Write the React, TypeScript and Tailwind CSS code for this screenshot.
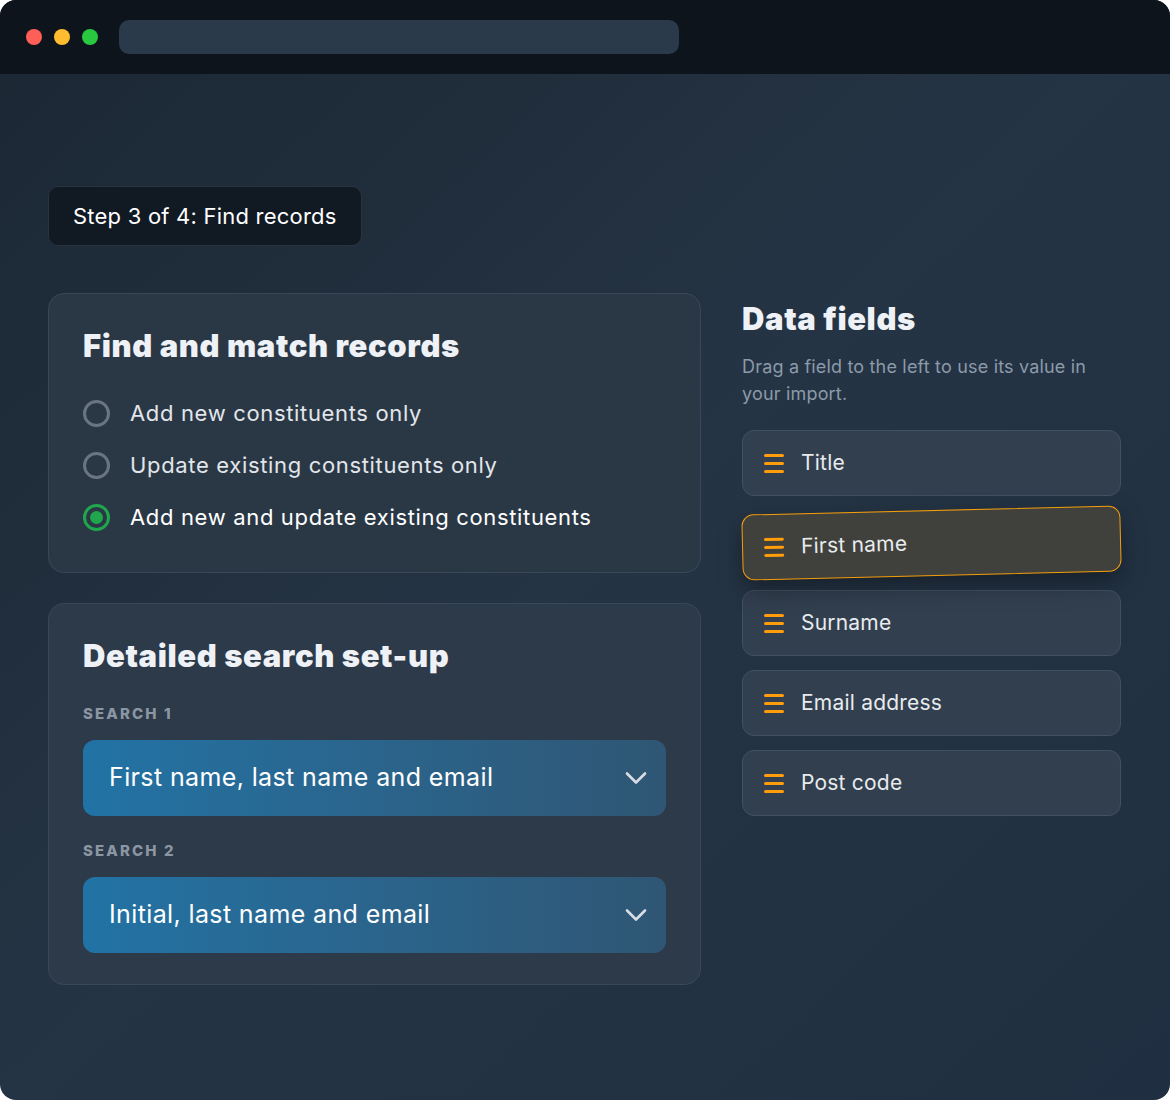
const fields = ['Title', 'First name', 'Surname', 'Email address', 'Post code']

const heading = { fontFamily: 'Inter, "Noto Sans", sans-serif' }

function Grip() {
  return (
    <span className="flex w-5 flex-col gap-[5px]">
      <span className="h-[3px] w-5 rounded-full bg-[#ff9d0a]" />
      <span className="h-[3px] w-5 rounded-full bg-[#ff9d0a]" />
      <span className="h-[3px] w-5 rounded-full bg-[#ff9d0a]" />
    </span>
  )
}

function Chevron() {
  return (
    <svg width="22" height="14" viewBox="0 0 22 14" fill="none" className="text-[#d7dde3]">
      <path d="M2 2.5l9 9 9-9" stroke="currentColor" strokeWidth="2.6" strokeLinecap="round" strokeLinejoin="round" />
    </svg>
  )
}

function Radio({ label, checked }: { label: string; checked?: boolean }) {
  return (
    <label className="flex h-7 items-center gap-5">
      <span
        className={
          checked
            ? 'flex h-[27px] w-[27px] items-center justify-center rounded-full border-[3px] border-[#20a64c]'
            : 'h-[27px] w-[27px] rounded-full border-[3px] border-[#6b7580]'
        }
      >
        {checked && <span className="h-[13px] w-[13px] rounded-full bg-[#20a64c]" />}
      </span>
      <span
        className={
          checked
            ? 'text-[22px] tracking-[0.03em] text-white'
            : 'text-[22px] tracking-[0.03em] text-[#e2e6ea]'
        }
      >
        {label}
      </span>
    </label>
  )
}

function SearchSelect({ label, value }: { label: string; value: string }) {
  return (
    <div>
      <p className="text-[15px] font-extrabold uppercase leading-5 tracking-[0.14em] text-[#8b96a2]" style={heading}>
        {label}
      </p>
      <button className="mt-4 flex h-[76px] w-full items-center justify-between rounded-xl bg-gradient-to-r from-[#2173a5] to-[#2f5674] pl-[26px] pr-[19px] text-left">
        <span className="text-[25px] tracking-[0.015em] text-white">{value}</span>
        <Chevron />
      </button>
    </div>
  )
}

export default function App() {
  return (
    <div className="min-h-screen bg-white" style={{ fontFamily: 'Inter, "Noto Sans", sans-serif' }}>
      <div className="h-[1100px] w-[1170px] overflow-hidden rounded-2xl bg-gradient-to-br from-[#1b2733] via-[#253444] to-[#1f2f41]">
        {/* window chrome */}
        <div className="flex h-[74px] items-center bg-[#0d141c] pl-[26px]">
          <span className="h-4 w-4 rounded-full bg-[#ff5f57]" />
          <span className="ml-3 h-4 w-4 rounded-full bg-[#febc2e]" />
          <span className="ml-3 h-4 w-4 rounded-full bg-[#28c840]" />
          <div className="ml-[21px] h-[34px] w-[560px] rounded-[10px] bg-[#2a3a4b]" />
        </div>

        <div className="px-[48px] pt-[112px]">
          <div className="inline-flex h-[60px] items-center rounded-[10px] border border-[#293442] bg-[#111923] px-6 text-[22px] tracking-[0.01em] text-white">
            Step 3 of 4: Find records
          </div>

          <div className="mt-[47px] grid grid-cols-[653px_379px] gap-[41px]">
            <div className="flex flex-col gap-[30px]">
              {/* match mode */}
              <section className="rounded-2xl border border-[#3a4757] bg-[#2a3846] px-[34px] pb-[41px] pt-[34px]">
                <h2 className="text-[31px] font-black leading-9 tracking-[0.02em] text-[#eef1f5]" style={heading}>
                  Find and match records
                </h2>
                <div className="mt-[35px] flex flex-col gap-6">
                  <Radio label="Add new constituents only" />
                  <Radio label="Update existing constituents only" />
                  <Radio label="Add new and update existing constituents" checked />
                </div>
              </section>

              {/* search setup */}
              <section className="rounded-2xl border border-[#3a4757] bg-[#2c3a4a] px-[34px] pb-[31px] pt-[34px]">
                <h2 className="text-[31px] font-black leading-9 tracking-[0.02em] text-[#eef1f5]" style={heading}>
                  Detailed search set-up
                </h2>
                <div className="mt-[30px] flex flex-col gap-[25px]">
                  <SearchSelect label="Search 1" value="First name, last name and email" />
                  <SearchSelect label="Search 2" value="Initial, last name and email" />
                </div>
              </section>
            </div>

            {/* data fields */}
            <aside className="pt-[8px]">
              <h2 className="text-[31px] font-black leading-9 tracking-[0.02em] text-[#eef1f5]" style={heading}>
                Data fields
              </h2>
              <p className="mt-[16px] text-[18px] leading-[27px] tracking-[0.01em] text-[#8c9aa9]">
                Drag a field to the left to use its value in your import.
              </p>
              <ul className="mt-[23px] flex flex-col gap-[14px]">
                {fields.map((f) =>
                  f === 'First name' ? (
                    <li
                      key={f}
                      className="flex h-[66px] -rotate-[1.4deg] items-center gap-[17px] rounded-xl border border-[#f59e0b] bg-[#40413c] px-[21px] shadow-[0_10px_24px_rgba(0,0,0,0.35)]"
                    >
                      <Grip />
                      <span className="text-[21px] tracking-[0.01em] text-[#e8ebee]">{f}</span>
                    </li>
                  ) : (
                    <li
                      key={f}
                      className="flex h-[66px] items-center gap-[17px] rounded-xl border border-[#425061] bg-[#323f4f] px-[21px]"
                    >
                      <Grip />
                      <span className="text-[21px] tracking-[0.01em] text-[#e8ebee]">{f}</span>
                    </li>
                  )
                )}
              </ul>
            </aside>
          </div>
        </div>
      </div>
    </div>
  )
}
